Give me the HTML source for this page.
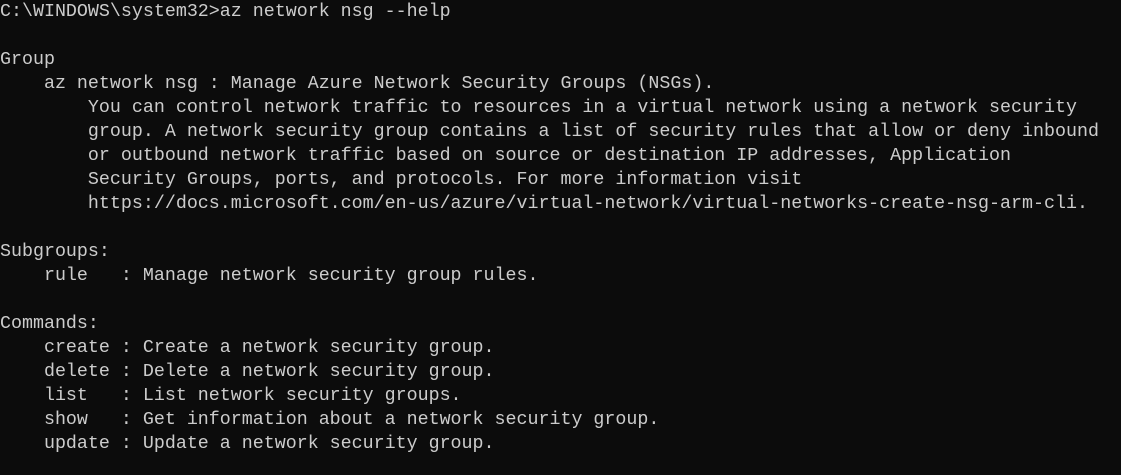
<!DOCTYPE html>
<html><head><meta charset="utf-8"><style>
html,body{margin:0;padding:0;background:#0c0c0c;width:1121px;height:475px;overflow:hidden}
pre{margin:0;position:absolute;left:0;top:0;font-family:"Liberation Mono",monospace;font-size:18.32px;line-height:24px;color:#cccccc;white-space:pre}
</style></head><body><pre>C:\WINDOWS\system32>az network nsg --help

Group
    az network nsg : Manage Azure Network Security Groups (NSGs).
        You can control network traffic to resources in a virtual network using a network security
        group. A network security group contains a list of security rules that allow or deny inbound
        or outbound network traffic based on source or destination IP addresses, Application
        Security Groups, ports, and protocols. For more information visit
        https://docs.microsoft.com/en-us/azure/virtual-network/virtual-networks-create-nsg-arm-cli.

Subgroups:
    rule   : Manage network security group rules.

Commands:
    create : Create a network security group.
    delete : Delete a network security group.
    list   : List network security groups.
    show   : Get information about a network security group.
    update : Update a network security group.
</pre></body></html>
